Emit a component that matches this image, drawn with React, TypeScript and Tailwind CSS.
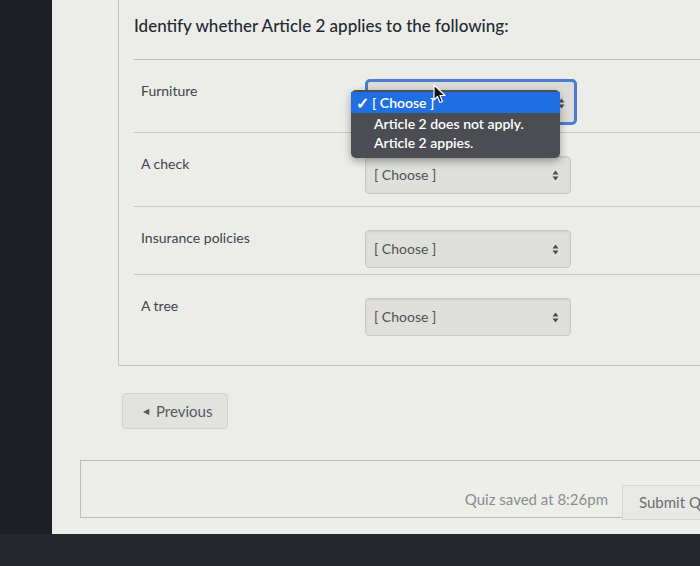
function UpDown() {
  return (
    <svg width="7" height="11" viewBox="0 0 7 11" className="shrink-0">
      <path d="M3.5 0.5 L6.5 4.5 L0.5 4.5 Z" fill="#4a4d52" />
      <path d="M3.5 10.5 L6.5 6.5 L0.5 6.5 Z" fill="#4a4d52" />
    </svg>
  );
}

function ChooseSelect({ focused = false }: { focused?: boolean }) {
  if (focused) {
    // the open menu hides the label, only the arrows peek out
    return (
      <div className="w-[212px] h-[46px] rounded-[5px] border-[3px] border-[#4a7cd0] bg-[#dcdcd8] flex items-center justify-end pr-[9px] pt-[2px]">
        <UpDown />
      </div>
    );
  }
  return (
    <div className="w-[206px] h-[38px] rounded-[4px] border border-[#c9c9c5] bg-[#dfdfdb] shadow-[inset_0_1px_2px_rgba(0,0,0,0.08)] flex items-center justify-between pl-[8px] pr-[11px]">
      <span className="text-[14px] text-[#4f5358] leading-[20px]">[ Choose ]</span>
      <UpDown />
    </div>
  );
}

function OpenMenu() {
  return (
    <div className="absolute left-[-14px] top-[7px] w-[209px] h-[68px] rounded-[5px] bg-[#4b4d53] shadow-[0_3px_8px_rgba(0,0,0,0.35)] pt-[2px] z-10">
      <div className="h-[21px] bg-[#1f6fe3] flex items-center pl-[5px] text-[14px] font-semibold text-white">
        <span className="w-[14px] text-[16px] font-bold leading-none">✓</span>
        <span className="ml-[2px]">[ Choose ]</span>
      </div>
      <div className="h-[20px] flex items-center pl-[23px] text-[14px] font-semibold text-white">
        Article 2 does not apply.
      </div>
      <div className="h-[18px] flex items-center pl-[23px] text-[14px] font-semibold text-white">
        Article 2 appies.
      </div>
    </div>
  );
}

function Cursor() {
  return (
    <svg
      width="13"
      height="20"
      viewBox="0 0 13 20"
      className="absolute left-[68px] top-[1px] z-20"
    >
      <path
        d="M1 1 L1 16 L4.5 12.5 L7 18.5 L9.5 17.5 L7 11.5 L12 11.5 Z"
        fill="#111"
        stroke="#fff"
        strokeWidth="1.2"
        strokeLinejoin="round"
      />
    </svg>
  );
}

const rows = [
  { label: "Furniture", h: "h-[73px]", open: true },
  { label: "A check", h: "h-[74px]", open: false },
  { label: "Insurance policies", h: "h-[68px]", open: false },
  { label: "A tree", h: "flex-1", open: false },
];

export default function App() {
  return (
    <div className="w-[700px] h-[566px] bg-[#202227] flex flex-col overflow-hidden font-['Lato',sans-serif]">
      <div className="flex h-[534px]">
        {/* left bezel */}
        <div className="w-[52px] bg-[#1d1f24]" />

        {/* screen */}
        <div className="flex-1 bg-[#ecece9] flex flex-col">
          {/* question panel */}
          <div className="ml-[66px] h-[366px] border-l border-b border-[#c4c4c0] pl-[15px] flex flex-col">
            <div className="h-[60px] border-b border-[#bdbdb9] pt-[14px]">
              <h2 className="text-[17px] leading-[24px] font-medium text-[#1f2a33]">
                Identify whether Article 2 applies to the following:
              </h2>
            </div>

            {rows.map((row, i) => (
              <div
                key={row.label}
                className={`${row.h} flex pt-[19px] ${
                  i < rows.length - 1 ? "border-b border-[#c8c8c4]" : ""
                }`}
              >
                <div className="w-[231px] pl-[7px] mt-[2px] text-[14px] leading-[20px] text-[#3d454c]">
                  {row.label}
                </div>
                <div className="relative mt-[4px]">
                  {row.open ? (
                    <>
                      <div className="-mt-[4px]">
                        <ChooseSelect focused />
                      </div>
                      <OpenMenu />
                      <Cursor />
                    </>
                  ) : (
                    <ChooseSelect />
                  )}
                </div>
              </div>
            ))}
          </div>

          {/* previous */}
          <div className="pl-[70px] mt-[27px]">
            <button className="w-[106px] h-[36px] rounded-[4px] border border-[#d2d2ce] bg-[#e2e2de] flex items-center pl-[20px] gap-[7px] text-[15px] text-[#555a60]">
              <span className="text-[8px] leading-none">◀</span>
              Previous
            </button>
          </div>

          {/* footer */}
          <div className="ml-[28px] mt-[31px] h-[58px] border border-r-0 border-[#bcbcb8] bg-[#ededea] flex justify-end items-start pt-[24px]">
            <span className="text-[15px] leading-[20px] text-[#8a8e93] mt-[4px] mr-[14px]">
              Quiz saved at 8:26pm
            </span>
            <div className="h-[35px] w-[78px] border border-r-0 border-[#d6d6d2] bg-[#e8e8e4] flex items-center pl-[16px] overflow-hidden whitespace-nowrap text-[15px] text-[#6a6e73]">
              Submit Quiz
            </div>
          </div>
        </div>
      </div>
      {/* bottom bezel */}
      <div className="flex-1 bg-[#25272c]" />
    </div>
  );
}
